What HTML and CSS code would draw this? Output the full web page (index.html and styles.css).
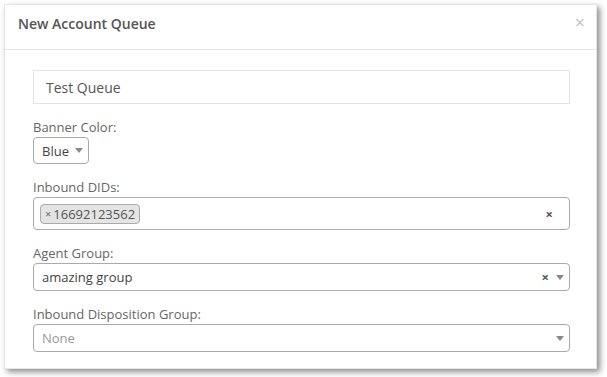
FILE: index.html
```html
<!DOCTYPE html>
<html lang="en">
<head>
    <meta charset="UTF-8">
    <meta name="viewport" content="width=device-width, initial-scale=1.0">
    <title>New Account Queue</title>
    <link rel="stylesheet" href="styles.css">
</head>
<body>
    <div class="modal">
        <div class="modal-header">
            <h4 class="modal-title">New Account Queue</h4>
            <span class="close">&times;</span>
        </div>
        <div class="modal-body">
            <div class="form-group">
                <input type="text" class="text-input" value="Test Queue">
            </div>
            <div class="form-group">
                <label>Banner Color:</label>
                <div class="select small">
                    <span class="value">Blue</span>
                    <span class="arrow"></span>
                </div>
            </div>
            <div class="form-group">
                <label>Inbound DIDs:</label>
                <div class="select multi">
                    <span class="tag"><span class="tag-x">&times;</span>16692123562</span>
                    <span class="spacer"></span>
                    <span class="clear">&times;</span>
                </div>
            </div>
            <div class="form-group">
                <label>Agent Group:</label>
                <div class="select">
                    <span class="value">amazing group</span>
                    <span class="spacer"></span>
                    <span class="clear">&times;</span>
                    <span class="arrow"></span>
                </div>
            </div>
            <div class="form-group">
                <label>Inbound Disposition Group:</label>
                <div class="select">
                    <span class="value placeholder">None</span>
                    <span class="spacer"></span>
                    <span class="arrow"></span>
                </div>
            </div>
        </div>
    </div>
</body>
</html>
```

FILE: styles.css
```css
body {
    margin: 0;
    padding: 4px 10px 8px 4px;
    background: #fff;
    font-family: "Open Sans", sans-serif;
    color: #555;
}
.modal {
    width: 593px;
    height: 365px;
    background: #fff;
    border: 1px solid #e6e6e6;
    box-sizing: border-box;
    box-shadow: 3px 3px 6px rgba(0, 0, 0, 0.45);
    overflow: hidden;
}
.modal-header {
    display: flex;
    align-items: flex-start;
    justify-content: space-between;
    height: 45px;
    padding: 9px 11px 0 13px;
    box-sizing: border-box;
    border-bottom: 1px solid #e5e5e5;
}
.modal-title {
    margin: 0;
    font-size: 14px;
    font-weight: 600;
    line-height: 20px;
    color: #555;
}
.close {
    font-size: 18px;
    color: #c4c4c4;
    line-height: 20px;
    margin-top: -2px;
}
.modal-body {
    padding: 20px 26px 0 28px;
}
.form-group {
    margin-bottom: 14px;
}
label {
    display: block;
    font-size: 13px;
    color: #666;
    line-height: 18px;
    margin-bottom: 1px;
}
.text-input {
    display: block;
    width: 100%;
    height: 34px;
    box-sizing: border-box;
    border: 1px solid #e3e3e3;
    padding: 0 12px;
    font-family: "Open Sans", sans-serif;
    font-size: 14px;
    color: #555;
    outline: none;
}
.select {
    display: flex;
    align-items: center;
    height: 28px;
    box-sizing: border-box;
    border: 1px solid #aaa;
    border-radius: 4px;
    padding: 0 5px 0 8px;
    font-size: 13px;
    color: #444;
}
.select.small {
    width: 56px;
    height: 27px;
    padding-right: 7px;
}
.select.small .value {
    flex: 1;
}
.select.multi {
    height: 33px;
    padding: 0 6px;
}
.spacer {
    flex: 1;
}
.placeholder {
    color: #999;
}
.arrow {
    width: 0;
    height: 0;
    border-left: 4px solid transparent;
    border-right: 4px solid transparent;
    border-top: 5px solid #888;
    margin-left: 7px;
}
.select.small .arrow {
    margin-left: 6px;
}
.clear {
    font-size: 13px;
    font-weight: bold;
    color: #555;
}
.select.multi .clear {
    margin-right: 10px;
}
.tag {
    display: inline-flex;
    align-items: center;
    height: 18px;
    padding: 0 4px;
    background: #e4e4e4;
    border: 1px solid #aaa;
    border-radius: 4px;
    font-size: 13px;
    color: #555;
}
.tag-x {
    color: #888;
    font-weight: bold;
    font-size: 11px;
    margin-right: 2px;
}
```
